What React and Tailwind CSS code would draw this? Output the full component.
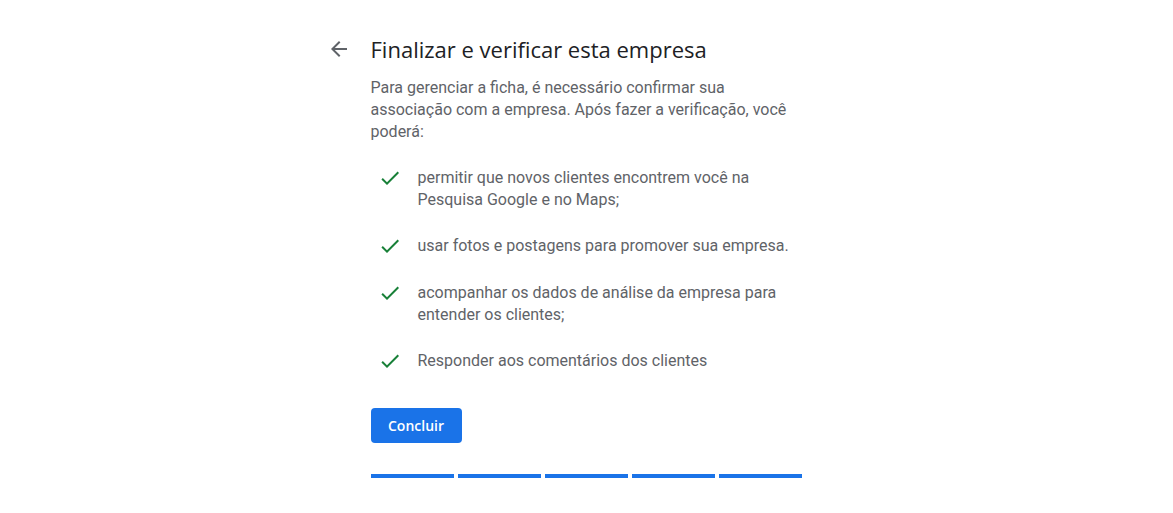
const benefits = [
  'permitir que novos clientes encontrem você na Pesquisa Google e no Maps;',
  'usar fotos e postagens para promover sua empresa.',
  'acompanhar os dados de análise da empresa para entender os clientes;',
  'Responder aos comentários dos clientes',
]

function CheckIcon() {
  return (
    <svg viewBox="0 0 24 24" className="w-6 h-6 shrink-0" fill="#188038">
      <path d="M9 16.17L4.83 12l-1.42 1.41L9 19 21 7l-1.41-1.41z" />
    </svg>
  )
}

function BackIcon() {
  return (
    <svg viewBox="0 0 24 24" className="w-6 h-6" fill="#5f6368">
      <path d="M20 11H7.83l5.59-5.59L12 4l-8 8 8 8 1.41-1.41L7.83 13H20v-2z" />
    </svg>
  )
}

export default function App() {
  return (
    <div className="min-h-screen bg-white pr-px font-['Roboto','Liberation_Sans',sans-serif]">
      <div className="w-[431px] mx-auto pt-[35px]">
        {/* Header */}
        <div className="flex items-center -ml-[44px]">
          <button className="w-6 h-6 flex items-center justify-center">
            <BackIcon />
          </button>
          <h1 className="ml-5 font-['Open_Sans','Roboto',sans-serif] text-[22px] leading-[28px] text-[#202124]">
            Finalizar e verificar esta empresa
          </h1>
        </div>

        <p className="mt-[14px] text-[16px] leading-[22px] text-[#5f6368]">
          Para gerenciar a ficha, é necessário confirmar sua associação com a empresa. Após fazer a verificação, você poderá:
        </p>

        {/* Benefits */}
        <ul className="mt-6 flex flex-col gap-6">
          {benefits.map((item) => (
            <li key={item} className="flex items-start">
              <div className="pl-[7px] -mt-[1px]">
                <CheckIcon />
              </div>
              <span className="ml-[16px] text-[16px] leading-[22px] text-[#5f6368]">{item}</span>
            </li>
          ))}
        </ul>

        <button className="mt-[35px] h-[35px] w-[91px] rounded bg-[#1a73e8] text-white text-[14px] font-['Open_Sans','Roboto',sans-serif] font-semibold">
          Concluir
        </button>

        {/* Progress */}
        <div className="mt-[31px] grid grid-cols-5 gap-1">
          <div className="h-1 bg-[#1a73e8]" />
          <div className="h-1 bg-[#1a73e8]" />
          <div className="h-1 bg-[#1a73e8]" />
          <div className="h-1 bg-[#1a73e8]" />
          <div className="h-1 bg-[#1a73e8]" />
        </div>
      </div>
    </div>
  )
}
